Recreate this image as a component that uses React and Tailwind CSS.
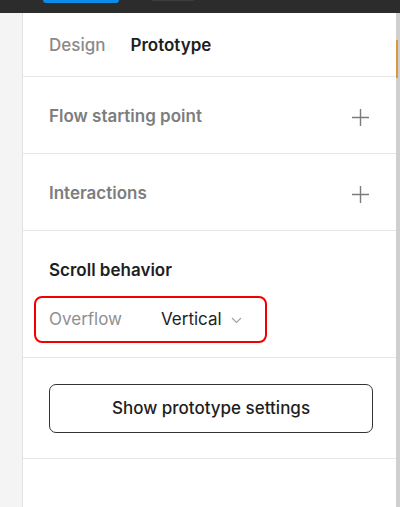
import React from 'react';

const Plus = () => (
  <svg width="19" height="19" viewBox="0 0 19 19" fill="none" stroke="#7b7b7b" strokeWidth="1.4">
    <path d="M9.5 1v17M1 9.5h17" />
  </svg>
);

const Chevron = () => (
  <svg width="11" height="7" viewBox="0 0 11 7" fill="none" stroke="#a3a3a3" strokeWidth="1.2">
    <path d="M1 1l4.5 4.5L10 1" />
  </svg>
);

const SectionRow = ({ title }) => (
  <div className="h-[77px] flex items-center justify-between pt-[4px] pl-[26px] pr-[26px] border-b border-[#e6e6e6]">
    <span className="text-[17px] font-semibold text-[#7d7d7d]">{title}</span>
    <Plus />
  </div>
);

export default function App() {
  return (
    <div className="w-[400px] h-[507px] flex flex-col bg-white font-['Inter',sans-serif] overflow-hidden">
      <div className="h-[13px] bg-[#2c2c2c] flex items-start shrink-0">
        <div className="ml-[43px] w-[76px] h-[3px] bg-[#0c8ce9] rounded-b-[3px]" />
        <div className="ml-[33px] w-[42px] h-[1px] bg-[#3d3d3d] rounded-b" />
      </div>
      <div className="flex-1 flex">
        <div className="w-[23px] bg-[#f4f4f4] border-r border-[#e2e2e2] shrink-0" />
        <div className="flex-1 flex flex-col">
          <div className="h-[64px] flex items-center gap-[25px] pt-[2px] pl-[26px] border-b border-[#e6e6e6]">
            <span className="text-[17px] font-medium text-[#8a8a8a]">Design</span>
            <span className="text-[17px] font-semibold text-[#1e1e1e]">Prototype</span>
          </div>
          <SectionRow title="Flow starting point" />
          <SectionRow title="Interactions" />
          <div className="h-[127px] flex flex-col border-b border-[#e6e6e6]">
            <div className="pl-[26px] pt-[28px] text-[17px] font-semibold text-[#1e1e1e] leading-[22px]">
              Scroll behavior
            </div>
            <div className="ml-[11px] mt-[15px] w-[233px] h-[47px] border-2 border-[#f10000] rounded-[8px] flex items-center pl-[13px]">
              <span className="w-[112px] text-[17px] text-[#8f8f8f]">Overflow</span>
              <span className="text-[17px] text-[#1e1e1e]">Vertical</span>
              <span className="ml-[9px] mt-[1px]"><Chevron /></span>
            </div>
          </div>
          <div className="h-[101px] pt-[26px] pl-[26px] pr-[23px] border-b border-[#e6e6e6]">
            <button className="w-full h-[49px] border border-[#333] rounded-[7px] text-[17px] font-medium text-[#1e1e1e] bg-white">
              Show prototype settings
            </button>
          </div>
        </div>
        <div className="w-[4px] shrink-0 bg-[#cfcfcf] flex flex-col">
          <div className="mt-[27px] h-[38px] w-[2px] bg-[#d69a3c]" />
        </div>
      </div>
    </div>
  );
}
